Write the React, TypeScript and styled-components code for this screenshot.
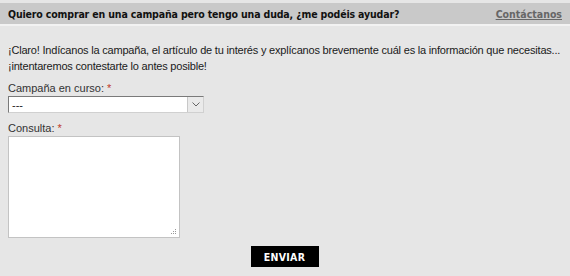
import styled, { createGlobalStyle } from "styled-components";

const Global = createGlobalStyle`
  html, body {
    margin: 0;
    padding: 0;
    background: #e6e6e6;
  }
  body {
    font-family: "Liberation Sans", Arial, sans-serif;
    font-size: 11px;
    color: #222;
  }
`;

const Panel = styled.div`
  width: 570px;
  height: 276px;
  background: #e6e6e6;
  padding-top: 3px;
  box-sizing: border-box;
  overflow: hidden;
`;

const Header = styled.div`
  height: 21px;
  background: #c9c9c9;
  display: flex;
  align-items: center;
  justify-content: space-between;
  padding: 0 8px 0 8px;
  border-bottom: 2px solid #f2f2f2;
`;

const Title = styled.span`
  font-family: "DejaVu Sans Condensed", "DejaVu Sans", sans-serif;
  font-weight: bold;
  font-size: 10.5px;
  color: #111;
  letter-spacing: -0.15px;
`;

const HeaderLink = styled.a`
  font-family: "DejaVu Sans Condensed", "DejaVu Sans", sans-serif;
  font-weight: bold;
  font-size: 10.5px;
  color: #666;
  text-decoration: underline;
  cursor: pointer;
`;

const Body = styled.div`
  padding: 16px 8px 0 8px;
`;

const Intro = styled.p`
  margin: 0 0 7px 0;
  line-height: 16px;
  color: #1a1a1a;
  white-space: nowrap;
  letter-spacing: -0.2px;
`;

const Field = styled.div`
  display: flex;
  flex-direction: column;
  margin-bottom: 8px;
`;

const Label = styled.label`
  line-height: 14px;
  margin-bottom: 1px;
  color: #333;
`;

const Req = styled.span`
  color: #c0392b;
`;

const SelectBox = styled.div`
  width: 196px;
  height: 17px;
  background: #fff;
  border-top: 1px solid #7a7a7a;
  border-left: 1px solid #7a7a7a;
  border-right: 1px solid #d0d0d0;
  border-bottom: 1px solid #d0d0d0;
  box-sizing: border-box;
  display: flex;
  align-items: center;
  justify-content: space-between;
  padding-left: 3px;
`;

const SelectArrow = styled.div`
  width: 15px;
  height: 15px;
  background: #eaeaea;
  border-left: 1px solid #c8c8c8;
  display: flex;
  align-items: center;
  justify-content: center;
`;

const TextArea = styled.div`
  width: 172px;
  height: 102px;
  background: #fff;
  border: 1px solid #c3c3c3;
  box-sizing: border-box;
  position: relative;
`;

const Grip = styled.svg`
  position: absolute;
  right: 2px;
  bottom: 2px;
`;

const Actions = styled.div`
  display: flex;
  justify-content: center;
  padding-right: 1px;
`;

const Button = styled.button`
  width: 68px;
  height: 21px;
  background: #000;
  color: #fff;
  border: none;
  font-family: "DejaVu Sans Condensed", "DejaVu Sans", sans-serif;
  font-weight: bold;
  font-size: 10.5px;
  letter-spacing: 0.3px;
  cursor: pointer;
`;

export default function App() {
  return (
    <Panel>
      <Global />
      <Header>
        <Title>
          Quiero comprar en una campaña pero tengo una duda, ¿me podéis ayudar?
        </Title>
        <HeaderLink>Contáctanos</HeaderLink>
      </Header>
      <Body>
        <Intro>
          ¡Claro! Indícanos la campaña, el artículo de tu interés y explícanos
          brevemente cuál es la información que necesitas...
          <br />
          ¡intentaremos contestarte lo antes posible!
        </Intro>
        <Field>
          <Label>
            Campaña en curso: <Req>*</Req>
          </Label>
          <SelectBox>
            <span>---</span>
            <SelectArrow>
              <svg width="8" height="5" viewBox="0 0 8 5">
                <path d="M0.5 0.5 L4 4 L7.5 0.5" fill="none" stroke="#666" strokeWidth="1" />
              </svg>
            </SelectArrow>
          </SelectBox>
        </Field>
        <Field>
          <Label>
            Consulta: <Req>*</Req>
          </Label>
          <TextArea>
            <Grip width="6" height="6" viewBox="0 0 6 6">
              <rect x="4" y="0" width="1" height="1" fill="#999" />
              <rect x="2" y="2" width="1" height="1" fill="#999" />
              <rect x="4" y="2" width="1" height="1" fill="#999" />
              <rect x="0" y="4" width="1" height="1" fill="#999" />
              <rect x="2" y="4" width="1" height="1" fill="#999" />
              <rect x="4" y="4" width="1" height="1" fill="#999" />
            </Grip>
          </TextArea>
        </Field>
        <Actions>
          <Button>ENVIAR</Button>
        </Actions>
      </Body>
    </Panel>
  );
}
